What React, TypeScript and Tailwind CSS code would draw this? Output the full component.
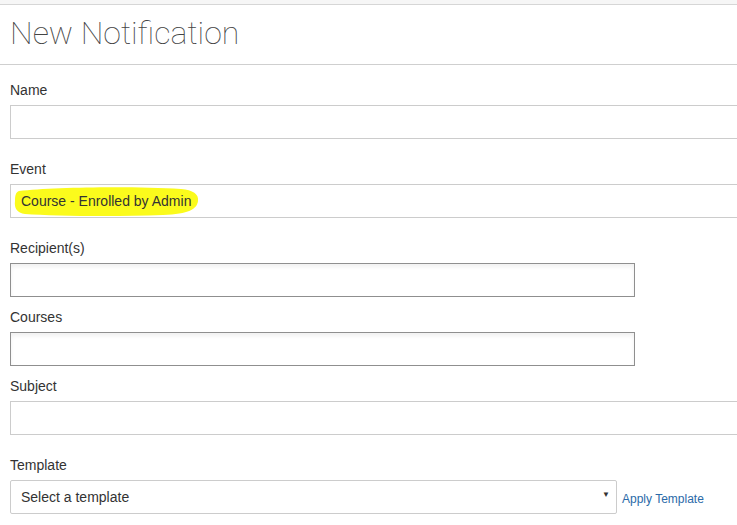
import type { ReactNode } from "react";

const sans = "font-['Liberation_Sans',Arial,sans-serif]";

function Field({ label, gap = "mb-5", children }: { label: string; gap?: string; children: ReactNode }) {
  return (
    <div className={gap}>
      <label className="mb-[5px] block h-5 text-[14px] leading-5 text-[#333]">{label}</label>
      {children}
    </div>
  );
}

// plain bootstrap-ish text box, stretches past the viewport edge
function WideInput({ children }: { children?: ReactNode }) {
  return (
    <div className="relative flex h-[34px] w-[760px] items-center border border-[#ccc] bg-white px-[10px] text-[14px] text-[#333]">
      {children}
    </div>
  );
}

// tag-picker style box with the darker border and inset top shadow
function PickerInput() {
  return (
    <div className="h-[34px] w-[625px] border border-[#8f8f8f] bg-white shadow-[inset_0_3px_4px_rgba(0,0,0,0.06)]" />
  );
}

function Highlight() {
  return (
    <svg className="pointer-events-none absolute left-[2px] top-[1px]" width="190" height="31" viewBox="0 0 190 31">
      <path
        d="M6 5 C40 1 120 0 168 3 C180 4 186 8 185 15 C184 23 176 28 150 29 C100 31 40 30 12 28 C4 27 1 22 2 15 C2 9 3 6 6 5 Z"
        fill="#fbfb1c"
      />
    </svg>
  );
}

export default function App() {
  return (
    <div className={`h-[525px] w-[737px] overflow-hidden bg-white ${sans}`}>
      <div className="h-[5px] border-b border-[#d6d6d6] bg-[#f6f6f6]" />
      <div className="border-b border-[#cfcfcf] pb-[11px] pl-[10px] pt-[8px]">
        <h1 className="font-['Roboto',sans-serif] text-[32px] font-thin leading-[40px] text-[#444]">New Notification</h1>
      </div>

      <div className="pl-[10px] pt-[15px]">
        <Field label="Name">
          <WideInput />
        </Field>
        <Field label="Event">
          <WideInput>
            <Highlight />
            <span className="relative">Course - Enrolled by Admin</span>
          </WideInput>
        </Field>
        <Field label="Recipient(s)" gap="mb-[10px]">
          <PickerInput />
        </Field>
        <Field label="Courses" gap="mb-[10px]">
          <PickerInput />
        </Field>
        <Field label="Subject">
          <WideInput />
        </Field>
        <Field label="Template">
          <div className="flex items-end gap-[5px]">
            <div className="flex h-[34px] w-[607px] items-center justify-between rounded-[2px] border border-[#ccc] bg-white pl-[10px] pr-[6px] text-[14px] text-[#333]">
              <span>Select a template</span>
              <span className="mb-[4px] text-[8px] text-[#333]">▼</span>
            </div>
            <a className="mb-[7px] text-[12px] leading-4 text-[#2a6aa8]" href="#">
              Apply Template
            </a>
          </div>
        </Field>
      </div>
    </div>
  );
}
